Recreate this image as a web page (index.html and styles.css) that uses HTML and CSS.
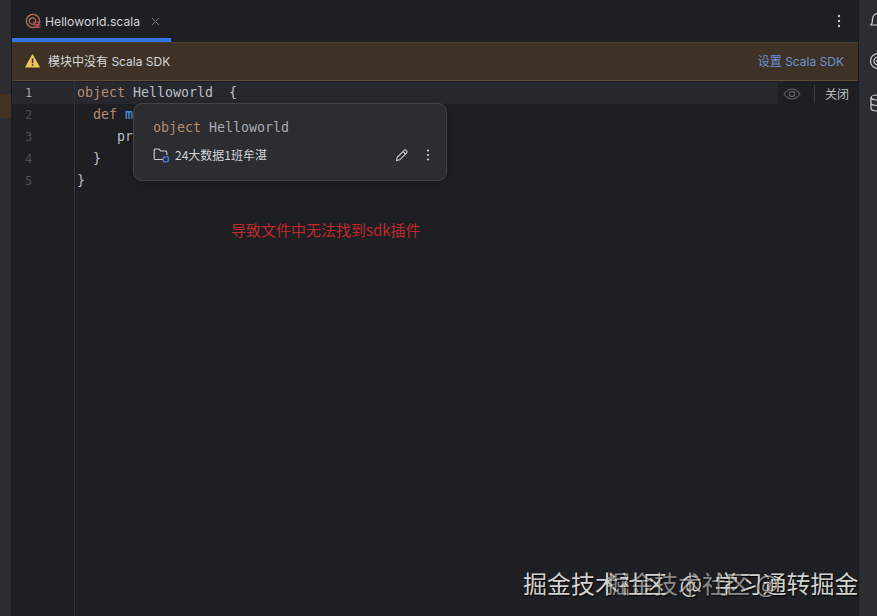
FILE: index.html
```html
<!DOCTYPE html>
<html lang="zh">
<head>
<meta charset="utf-8">
<title>Helloworld.scala</title>
<link rel="stylesheet" href="styles.css">
</head>
<body>
<div class="ide">
  <aside class="left-strip"><div class="left-mark"></div></aside>
  <main class="center">
    <div class="tabs">
      <div class="tab">
        <svg class="tab-icon" width="16" height="16" viewBox="0 0 16 16" fill="none">
          <circle cx="8" cy="8" r="6.6" stroke="#b5735a" stroke-width="1.3"/>
          <circle cx="7.5" cy="8" r="3.2" stroke="#b5735a" stroke-width="1.2"/>
          <rect x="8" y="8.5" width="7.5" height="1.4" fill="#b04a50"/>
          <rect x="8" y="11" width="7.5" height="1.4" fill="#b04a50"/>
          <rect x="8" y="13.5" width="7.5" height="1.4" fill="#b04a50"/>
        </svg>
        <span class="tab-name">Helloworld.scala</span>
        <svg class="tab-close" width="9" height="9" viewBox="0 0 9 9" fill="none" stroke="#7d8087" stroke-width="1"><path d="M1 1l7 7M8 1l-7 7"/></svg>
      </div>
      <svg class="dots" width="4" height="14" viewBox="0 0 4 14" fill="#c9ccd2"><circle cx="2" cy="2" r="1.2"/><circle cx="2" cy="7" r="1.2"/><circle cx="2" cy="12" r="1.2"/></svg>
    </div>
    <div class="banner">
      <svg width="15" height="14" viewBox="0 0 15 14"><path d="M7.5 1L14.2 13H.8z" fill="#f2c55c" stroke="#f2c55c" stroke-width="1.2" stroke-linejoin="round"/><rect x="6.8" y="4.4" width="1.5" height="4.8" fill="#3b3022"/><rect x="6.8" y="10.2" width="1.5" height="1.6" fill="#3b3022"/></svg>
      <span class="banner-text">模块中没有 Scala SDK</span>
      <a class="banner-link">设置 Scala SDK</a>
    </div>
    <div class="editor">
      <div class="gutter">
        <div class="num current">1</div>
        <div class="num">2</div>
        <div class="num">3</div>
        <div class="num">4</div>
        <div class="num">5</div>
      </div>
      <div class="code">
        <div class="line current"><span class="kw">object</span> Helloworld  {</div>
        <div class="line"><span class="kw">  def</span> <span class="fn">main</span></div>
        <div class="line">     println</div>
        <div class="line">  }</div>
        <div class="line">}</div>
      </div>
      <div class="reader">
        <svg width="18" height="12" viewBox="0 0 18 12" fill="none" stroke="#5f6268" stroke-width="1.2"><path d="M1 6c2.500-3.300 5-5 8-5s5.500 1.700 8 5c-2.500 3.300-5 5-8 5s-5.500-1.700-8-5z"/><circle cx="9" cy="6" r="2.600"/></svg>
        <span class="reader-sep"></span>
        <span class="reader-close">关闭</span>
      </div>
      <div class="popup">
        <div class="popup-title"><span class="kw">object</span> Helloworld</div>
        <div class="popup-row">
          <svg width="16" height="16" viewBox="0 0 16 16" fill="none"><path d="M10 12.500H2.200a1 1 0 0 1-1-1V3a1 1 0 0 1 1-1h3.600l2 2h4.500a1.500 1.500 0 0 1 1.500 1.500V8" stroke="#ced0d6" stroke-width="1.100"/><rect x="10.300" y="9.800" width="5" height="5" rx="1" stroke="#4a82e8" stroke-width="1.300"/></svg>
          <span class="popup-path">24大数据1班牟湛</span>
          <svg class="popup-edit" width="14" height="14" viewBox="0 0 14 14" fill="none" stroke="#ced0d6" stroke-width="1.100"><path d="M1.500 12.500l.7-3.200 7-7a1.300 1.300 0 0 1 1.900 0l.6.600a1.300 1.300 0 0 1 0 1.900l-7 7z"/><path d="M8 3.500l2.500 2.500"/></svg>
          <svg class="popup-more" width="4" height="12" viewBox="0 0 4 12" fill="#ced0d6"><circle cx="2" cy="1.500" r="1.100"/><circle cx="2" cy="6" r="1.100"/><circle cx="2" cy="10.500" r="1.100"/></svg>
        </div>
      </div>
      <div class="note">导致文件中无法找到sdk插件</div>
    </div>
  </main>
  <aside class="right-strip">
    <svg width="19" height="18" viewBox="0 0 19 18" fill="none" stroke="#ced0d6" stroke-width="1.200"><path d="M2 15c1.500-1.500 1.500-3 1.500-6a5.500 5.500 0 0 1 11 0c0 3 0 4.500 1.500 6z"/></svg>
    <svg width="19" height="18" viewBox="0 0 19 18" fill="none" stroke="#ced0d6" stroke-width="1.200"><circle cx="9" cy="9" r="7.500"/><circle cx="9" cy="9" r="4"/><circle cx="9" cy="9" r="1.200"/></svg>
    <svg width="19" height="18" viewBox="0 0 19 18" fill="none" stroke="#ced0d6" stroke-width="1.200"><ellipse cx="9" cy="3.500" rx="7" ry="2.500"/><path d="M2 3.500v11c0 1.400 3.100 2.500 7 2.500s7-1.100 7-2.500v-11M2 9c0 1.400 3.100 2.500 7 2.500S16 10.400 16 9"/></svg>
  </aside>
</div>
<div class="wm wm-a">掘金技术社区 @ 学习通转掘金</div>
<div class="wm wm-b">掘金技术社区 @</div>
</body>
</html>
```
FILE: styles.css
```css
* { box-sizing: border-box; }
html, body { margin: 0; height: 100%; overflow: hidden; background: #1e1f22; }
body { position: relative; font-family: "Inter", "Noto Sans CJK SC", sans-serif; color: #ced0d6; }
.ide { display: grid; grid-template-columns: 12px 1fr 19px; height: 616px; }
.left-strip { background: #2b2d30; border-right: 1px solid #1a1b1e; padding-top: 94px; }
.left-mark { width: 11px; height: 24px; background: #43321f; }
.right-strip { background: #2b2d30; border-left: 1px solid #1a1b1e; display: flex; flex-direction: column; gap: 24px; padding: 10px 0 0 10px; overflow: hidden; }
.right-strip svg { flex: none; }
.center { display: flex; flex-direction: column; min-width: 0; }

.tabs { height: 42px; display: flex; align-items: flex-start; justify-content: space-between; padding-right: 17px; background: #1e1f22; }
.tab { width: 159px; height: 42px; border-bottom: 4px solid #3574f0; display: flex; align-items: center; padding: 4px 0 0 13px; }
.tab-icon { flex: none; }
.tab-name { margin-left: 4px; font-size: 12.200px; color: #d2d4da; white-space: nowrap; }
.tab-close { margin-left: 11px; flex: none; }
.dots { margin-top: 14px; }

.banner { height: 39px; background: #3d3225; border-top: 1px solid #4a3d2b; border-bottom: 1px solid #5d4d37; display: flex; align-items: center; padding: 0 14px 2px 13px; font-size: 12px; }
.banner-text { margin-left: 8px; color: #d6d8de; }
.banner-link { margin-left: auto; color: #6e93d6; }

.editor { position: relative; flex: 1; display: flex; font-family: "DejaVu Sans Mono", "Noto Sans CJK SC", monospace; font-size: 13.300px; line-height: 22px; }
.gutter { width: 63px; flex: none; border-right: 1px solid #313438; padding-top: 1px; }
.num { height: 22px; padding-left: 13px; font-size: 12px; color: #4b5059; }
.num.current { color: #a1a3ab; background: #26282e; }
.code { flex: 1; padding-top: 1px; }
.line { height: 22px; padding-left: 2px; color: #bcbec4; white-space: pre; }
.line.current { background: #26282e; }
.kw { color: #b98a6c; }
.fn { color: #56a8f5; }

.reader { position: absolute; top: 0; right: 0; height: 26px; width: 80px; display: flex; align-items: center; background: #1e1f22; padding: 0 0 0 5px; }
.reader-sep { width: 1px; height: 18px; background: #393b40; margin-left: 13px; }
.reader-close { margin-left: 10px; font-family: "Noto Sans CJK SC", sans-serif; font-size: 12px; color: #bcbec4; }

.popup { position: absolute; left: 121px; top: 22px; width: 314px; height: 78px; border: 1px solid #43454a; border-radius: 9px; background: #2b2d30; padding: 13px 14px 0 19px; box-shadow: 0 2px 10px rgba(0,0,0,.25); }
.popup-title { height: 22px; color: #a9abb2; }
.popup-row { display: flex; align-items: center; height: 22px; margin-top: 5px; font-family: "Noto Sans CJK SC", sans-serif; font-size: 12px; }
.popup-path { margin-left: 6px; color: #d2d4da; }
.popup-edit { margin-left: auto; }
.popup-more { margin-left: 17px; margin-right: 2px; }

.note { position: absolute; left: 219px; top: 139px; font-family: "Noto Sans CJK SC", sans-serif; font-size: 15px; line-height: 20px; color: #c0282d; white-space: nowrap; }

.wm { position: absolute; top: 569px; left: 523px; font-family: "Noto Sans CJK SC", sans-serif; font-size: 24px; line-height: 28px; white-space: nowrap; color: #d2d2d0; text-shadow: 1px 1px 1px #000; word-spacing: 7px; }
.wm-b { left: 606px; word-spacing: 0; opacity: .6; }
```
